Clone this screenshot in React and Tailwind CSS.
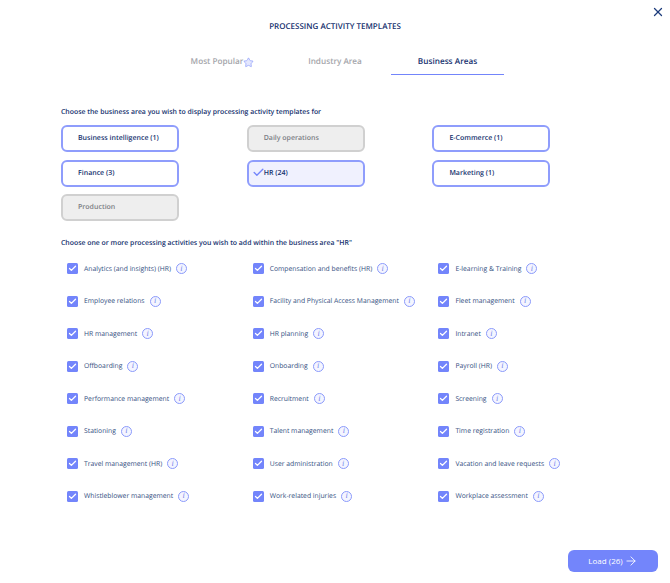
import React from "react";
import { X, Star, Check, ArrowRight } from "lucide-react";

const areas = [
  { name: "Business intelligence (1)" },
  { name: "Daily operations", disabled: true },
  { name: "E-Commerce (1)" },
  { name: "Finance (3)" },
  { name: "HR (24)", selected: true },
  { name: "Marketing (1)" },
  { name: "Production", disabled: true },
];

const activities = [
  "Analytics (and insights) (HR)",
  "Compensation and benefits (HR)",
  "E-learning & Training",
  "Employee relations",
  "Facility and Physical Access Management",
  "Fleet management",
  "HR management",
  "HR planning",
  "Intranet",
  "Offboarding",
  "Onboarding",
  "Payroll (HR)",
  "Performance management",
  "Recruitment",
  "Screening",
  "Stationing",
  "Talent management",
  "Time registration",
  "Travel management (HR)",
  "User administration",
  "Vacation and leave requests",
  "Whistleblower management",
  "Work-related injuries",
  "Workplace assessment",
];

const AreaButton = ({ area }) => {
  let look = "bg-white border-[#8f9dfc] text-[#15316e]";
  if (area.disabled) look = "bg-[#eeeeee] border-[#d0d0d0] text-[#7c7e85]";
  if (area.selected) look = "bg-[#f0f1fe] border-[#8f9dfc] text-[#15316e]";

  return (
    <div className={`relative flex h-[27px] w-[118px] items-center rounded-[6px] border-2 pl-[15px] pt-[2px] text-[7px] font-semibold ${look}`}>
      {area.selected && (
        <Check className="absolute left-[3px] top-[4px] h-[13px] w-[13px] text-[#7385fb]" strokeWidth={2.5} />
      )}
      {area.name}
    </div>
  );
};

const InfoIcon = () => (
  <span className="ml-[5px] flex h-[11px] w-[11px] shrink-0 items-center justify-center rounded-full border border-[#8b9afb] bg-[#f4f5ff] font-['Liberation_Serif',serif] text-[8px] italic text-[#6f80ea]">
    i
  </span>
);

const ActivityRow = ({ label }) => (
  <div className="flex h-[11px] items-center">
    <span className="mr-[6px] flex h-[11px] w-[11px] shrink-0 items-center justify-center rounded-[1.5px] bg-[#7385fb]">
      <Check className="h-[9px] w-[9px] text-white" strokeWidth={3.5} />
    </span>
    <span className="whitespace-nowrap text-[6.8px] text-[#34507f]">{label}</span>
    <InfoIcon />
  </div>
);

export default function App() {
  return (
    <div className="relative flex h-[583px] w-[670px] flex-col bg-white font-['Open_Sans',sans-serif] [text-rendering:geometricPrecision]">
      <button className="absolute right-[5px] top-[5px] text-[#1d3c7c]">
        <X className="h-[14px] w-[14px]" strokeWidth={2.2} />
      </button>

      <h1 className="mt-[21px] text-center text-[8px] leading-[11px] font-semibold text-[#15316e]">
        PROCESSING ACTIVITY TEMPLATES
      </h1>

      <div className="mt-[20px] flex justify-center">
        <div className="flex h-[23px] w-[112.5px] items-center justify-center pb-[2px] text-[8.2px] font-semibold text-[#a5a6ab]">
          Most Popular
          <Star className="h-[11px] w-[11px] text-[#8b9afb]" fill="#e4e7fe" strokeWidth={1.5} />
        </div>
        <div className="flex h-[23px] w-[112.5px] items-center justify-center pb-[2px] text-[8.2px] font-semibold text-[#a5a6ab]">
          Industry Area
        </div>
        <div className="flex h-[23px] w-[112.5px] items-center justify-center border-b border-[#7385fb] pb-[2px] text-[8.2px] font-semibold text-[#15316e]">
          Business Areas
        </div>
      </div>

      <div className="mt-[32px] px-[61px]">
        <p className="text-[6.9px] leading-[11px] font-semibold text-[#15316e]">
          Choose the business area you wish to display processing activity templates for
        </p>
        <div className="mt-[7px] grid grid-cols-[185.7px_185.7px_118px] gap-y-[7.6px]">
          {areas.map((a) => (
            <AreaButton key={a.name} area={a} />
          ))}
        </div>

        <p className="mt-[17px] text-[6.9px] leading-[11px] font-semibold text-[#15316e]">
          Choose one or more processing activities you wish to add within the business area "HR"
        </p>
        <div className="mt-[14px] grid grid-cols-[185.7px_185.7px_185.7px] gap-y-[21.5px] pl-[6px]">
          {activities.map((label) => (
            <ActivityRow key={label} label={label} />
          ))}
        </div>
      </div>

      <button className="absolute bottom-[11px] right-[12px] flex h-[22px] w-[90px] items-center justify-center gap-[1px] rounded-[6px] bg-[#7385fb] text-[8px] text-white">
        Load (26)
        <ArrowRight className="h-[14px] w-[14px]" strokeWidth={1.5} />
      </button>
    </div>
  );
}
